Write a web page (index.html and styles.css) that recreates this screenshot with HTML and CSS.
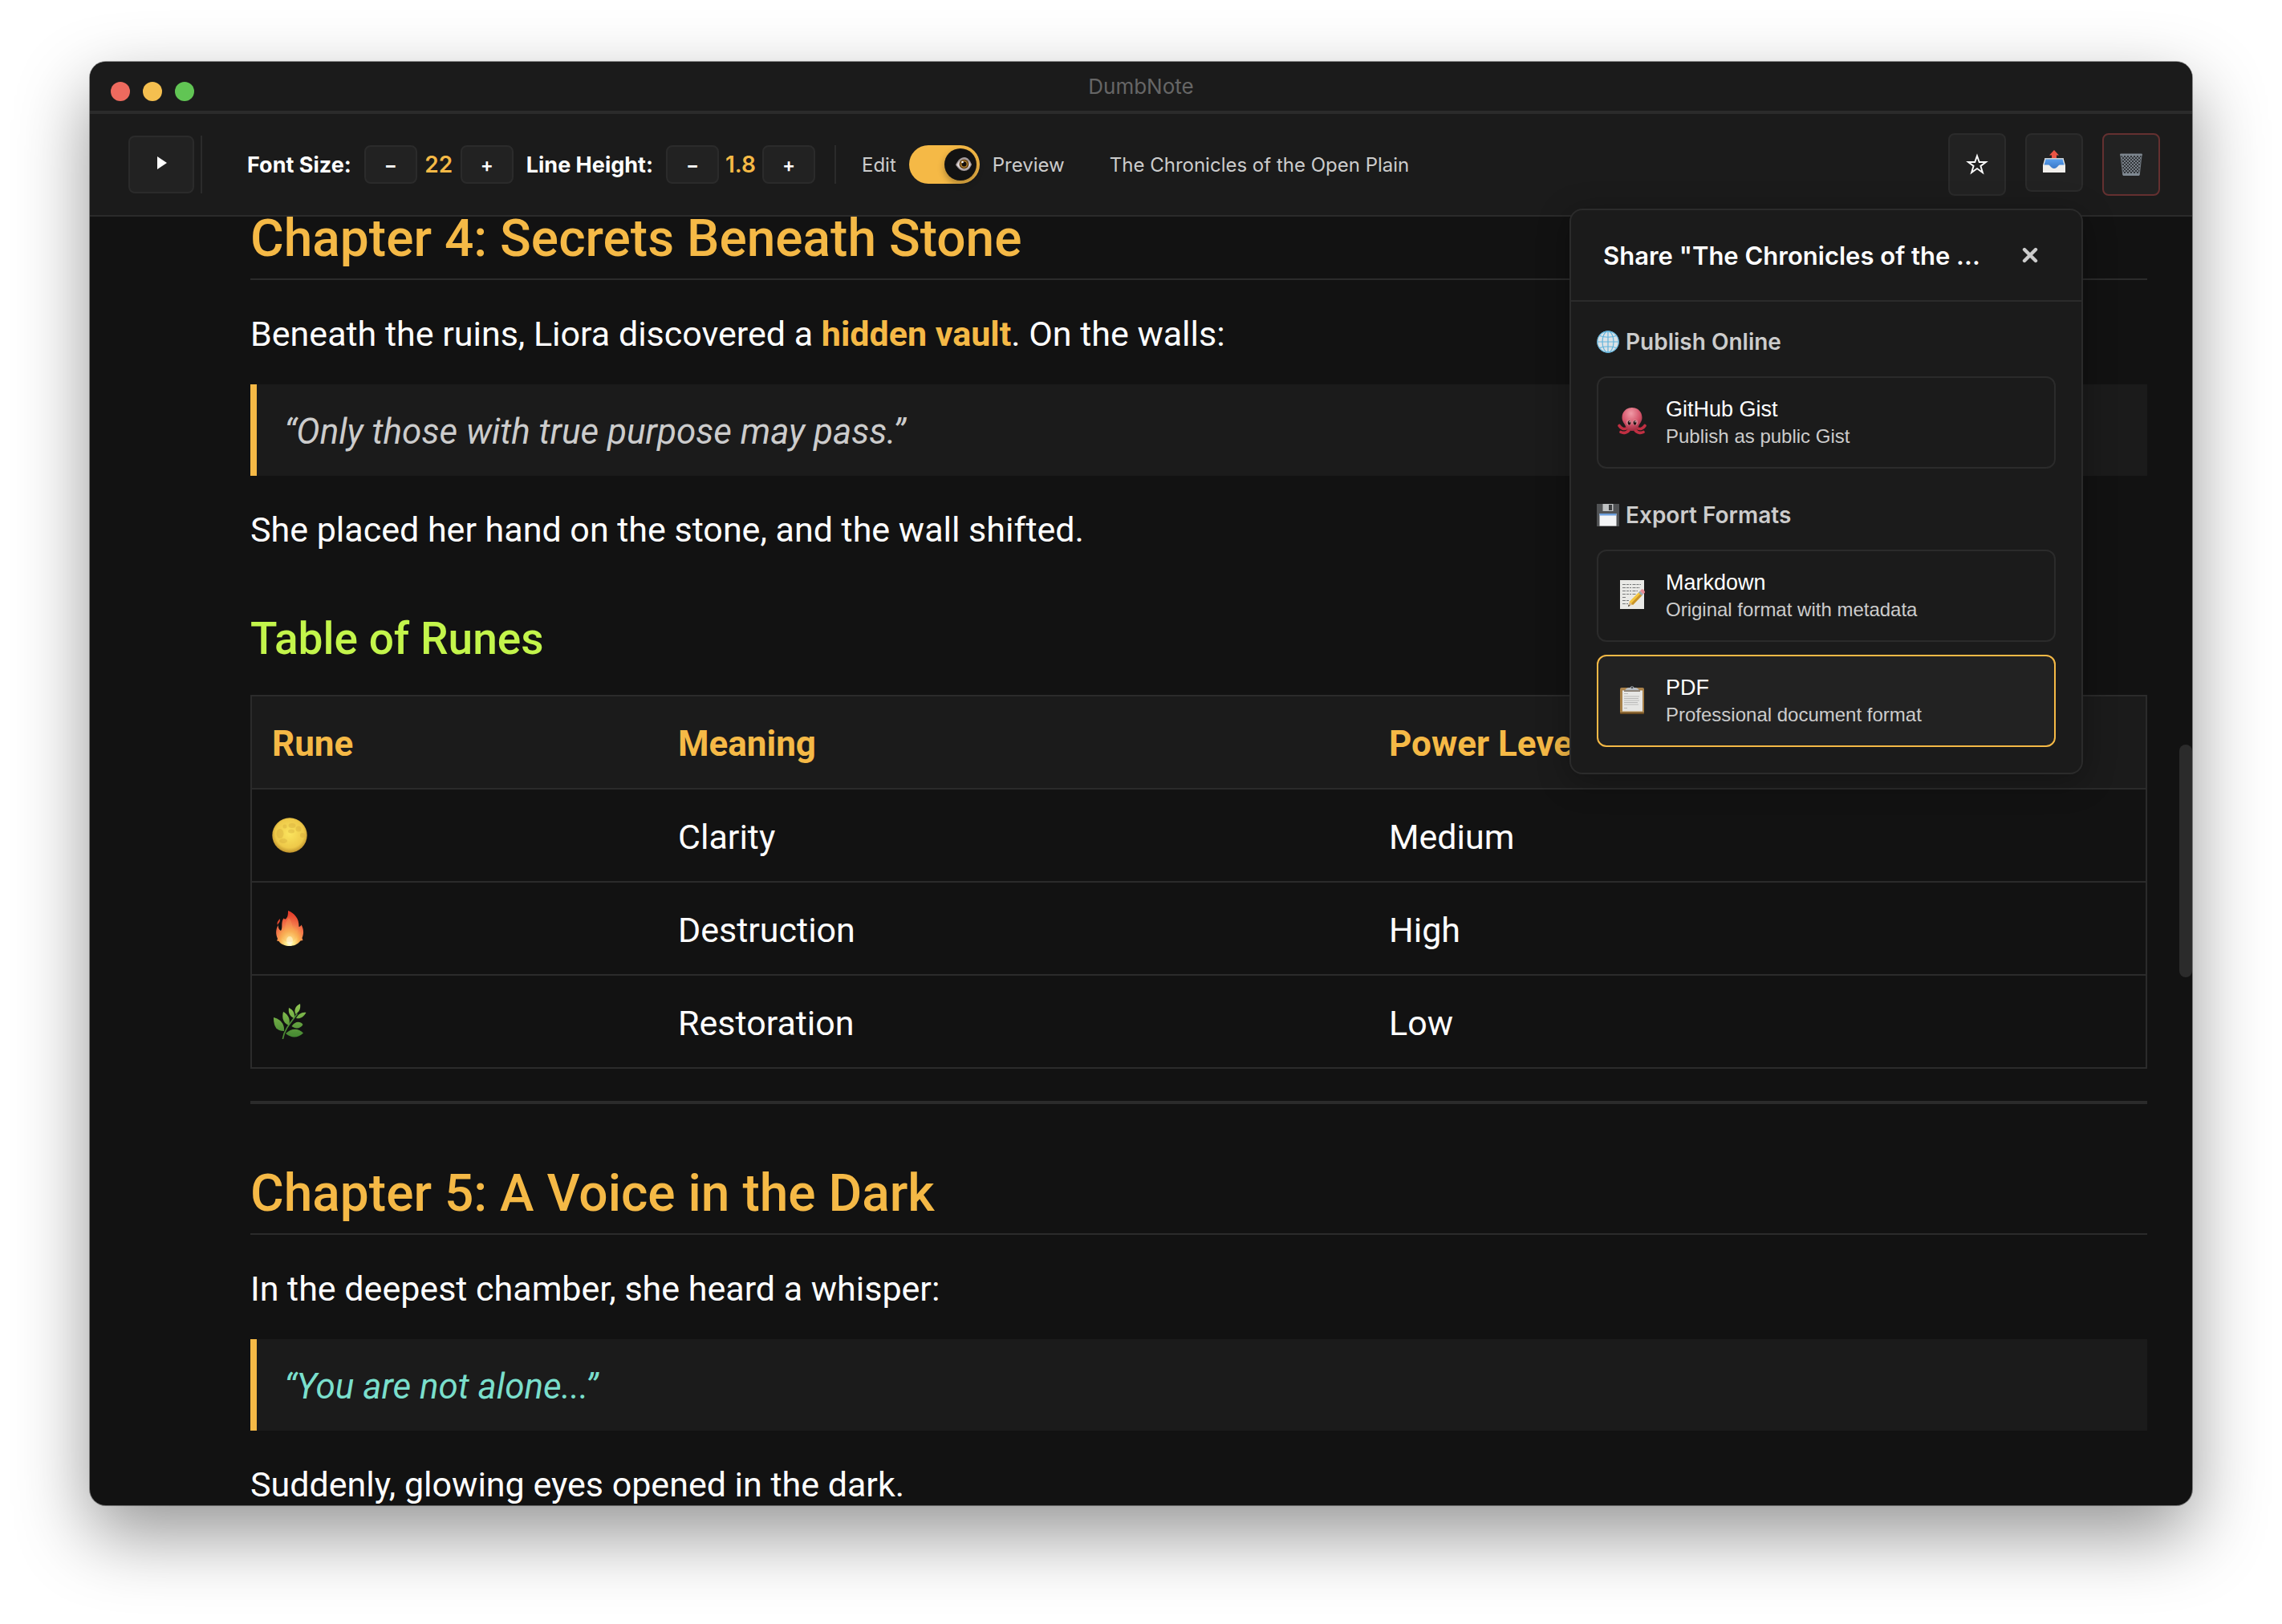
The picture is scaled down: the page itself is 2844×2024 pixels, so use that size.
FILE: index.html
```html
<!DOCTYPE html>
<html lang="en">
<head>
<meta charset="utf-8">
<meta name="viewport" content="width=device-width, initial-scale=1">
<title>DumbNote</title>
<link rel="stylesheet" href="styles.css">
</head>
<body>
<div class="window">
  <header class="titlebar">
    <div class="lights">
      <button class="light light-close" type="button" aria-label="Close window"></button>
      <button class="light light-min" type="button" aria-label="Minimize window"></button>
      <button class="light light-zoom" type="button" aria-label="Zoom window"></button>
    </div>
    <h1 class="app-name">DumbNote</h1>
  </header>

  <div class="toolbar" role="toolbar" aria-label="Note settings">
    <div class="sidebar-toggle">
      <button class="btn btn-expand" type="button" aria-label="Show notes list">
        <svg width="14" height="16" viewBox="0 0 14 16" aria-hidden="true"><path d="M2 0 14 8 2 16Z" fill="#fff"/></svg>
      </button>
    </div>

    <div class="steppers">
      <div class="stepper" role="group" aria-labelledby="font-size-label">
        <span class="stepper-label" id="font-size-label">Font Size:</span>
        <button class="btn btn-step" type="button" aria-label="Decrease font size">−</button>
        <output class="stepper-value">22</output>
        <button class="btn btn-step" type="button" aria-label="Increase font size">+</button>
      </div>
      <div class="stepper" role="group" aria-labelledby="line-height-label">
        <span class="stepper-label" id="line-height-label">Line Height:</span>
        <button class="btn btn-step" type="button" aria-label="Decrease line height">−</button>
        <output class="stepper-value">1.8</output>
        <button class="btn btn-step" type="button" aria-label="Increase line height">+</button>
      </div>
    </div>

    <div class="mode">
      <span>Edit</span>
      <span class="switch">
        <input class="switch-input" type="checkbox" role="switch" id="preview-mode" checked>
        <svg class="switch-eye" width="20" height="20" viewBox="0 0 20 20" aria-hidden="true">
          <path d="M0 10.500C3 4.500 6 1 11 1c4 0 7 4 9 9-2 5-5 8-9.500 8C6 18 3 15 0 10.500Z" fill="#a39a9c"/>
          <path d="M1.500 10.500C4 6 7 3.500 11 3.500c3 0 5.500 3 7.500 6.500-2 4-4.500 6-8 6-4 0-6.500-2-9-5.500Z" fill="#e6dedf"/>
          <circle cx="10.500" cy="9.500" r="6" fill="#5a3a12"/>
          <circle cx="10.500" cy="9.500" r="4.700" fill="#a8782a"/>
          <circle cx="10.500" cy="9.500" r="3" fill="#120d0a"/>
          <circle cx="8.500" cy="7" r="1.300" fill="#fff"/>
        </svg>
      </span>
      <label for="preview-mode">Preview</label>
    </div>

    <p class="note-name">The Chronicles of the Open Plain</p>

    <div class="actions">
      <button class="btn btn-action" type="button" aria-label="Add to favorites">
        <svg width="28" height="28" viewBox="0 0 28 28" aria-hidden="true"><path d="M14 3.200 16.700 11H25l-6.600 4.900 2.500 8.100L14 19.100 7.100 24l2.500-8.100L3 11h8.300Z" fill="none" stroke="#fff" stroke-width="1.900"/></svg>
      </button>
      <div class="share">
        <button class="btn btn-action btn-share" type="button" aria-label="Share note" aria-expanded="true" aria-controls="share-panel">
          <svg width="28" height="28" viewBox="0 0 28 28" aria-hidden="true">
            <defs><linearGradient id="tray" x1="0" y1="0" x2="0" y2="1"><stop offset="0" stop-color="#5aa0ee"/><stop offset="1" stop-color="#3a78c8"/></linearGradient></defs>
            <path d="M2.500 10h23L28 19v9H0v-9Z" fill="#f1efec"/>
            <path d="M3.500 11h21l2 7.500h-5.500c-2 0-3 4.500-7 4.500s-5-4.500-7-4.500H1.500Z" fill="url(#tray)"/>
            <path d="M2.500 10h23l.3 1.500H2.200Z" fill="#c9cfd3"/>
            <path d="M14 0 20 6.500h-3V10h-6V6.500H8Z" fill="#ea5545"/>
          </svg>
        </button>

        <section class="panel" id="share-panel" aria-labelledby="share-title">
          <header class="panel-head">
            <h2 class="panel-title" id="share-title">Share "The Chronicles of the ...</h2>
            <button class="panel-close" type="button" aria-label="Close share panel">
              <svg width="20" height="20" viewBox="0 0 20 20" aria-hidden="true"><path d="M3 3 17 17M17 3 3 17" fill="none" stroke="#ccc" stroke-width="4.400" stroke-linecap="round"/></svg>
            </button>
          </header>
          <div class="panel-body">
            <h3 class="panel-group">
              <svg width="28" height="28" viewBox="0 0 28 28" aria-hidden="true">
                <circle cx="14" cy="14" r="13.500" fill="#dbe2e6"/>
                <g fill="none" stroke="#62b4dc" stroke-width="1.200"><circle cx="14" cy="14" r="13.200"/><ellipse cx="14" cy="14" rx="7" ry="13.200"/><path d="M14 1v26M1 14h26M3.500 6.500Q14 10 24.500 6.500M3.500 21.500Q14 18 24.500 21.500"/></g>
              </svg>
              Publish Online
            </h3>
            <button class="option" type="button">
              <svg class="option-icon" width="36" height="36" viewBox="0 0 36 36" aria-hidden="true">
                <defs><radialGradient id="octo" cx=".45" cy=".25" r=".8"><stop offset="0" stop-color="#f09aa6"/><stop offset=".55" stop-color="#d5566c"/><stop offset="1" stop-color="#96263a"/></radialGradient></defs>
                <g fill="none" stroke="#c02f42" stroke-linecap="round" stroke-width="3.600"><path d="M13 26C8 29 4 27 2 23.500M23 26c5 3 9 1 11-2.500M15 28c-3 5-8 5-11 3.500M21 28c3 5 8 5 11 3.500"/></g>
                <path d="M18 1c7.500 0 12.500 5.500 12.500 12.500 0 5-3 7-4.500 11C25 28 21 30 18 30s-7-2-8-5.500c-1.500-4-4.500-6-4.500-11C5.500 6.500 10.500 1 18 1Z" fill="url(#octo)"/>
                <g fill="#d8808c"><circle cx="14.300" cy="19.500" r="3.400"/><circle cx="21.700" cy="19.500" r="3.400"/></g>
                <g fill="#241014"><ellipse cx="14.500" cy="20" rx="1.900" ry="2.700"/><ellipse cx="21.500" cy="20" rx="1.900" ry="2.700"/></g>
                <g fill="#fff"><circle cx="15" cy="18.800" r=".7"/><circle cx="22" cy="18.800" r=".7"/></g>
              </svg>
              <span class="option-text"><span class="option-name">GitHub Gist</span><span class="option-note">Publish as public Gist</span></span>
            </button>

            <h3 class="panel-group">
              <svg width="28" height="28" viewBox="0 0 28 28" aria-hidden="true">
                <path d="M0 0h28v28H0Z" fill="#505254"/>
                <path d="M7.500 0h13v9h-13Z" fill="#bfc1c2"/><path d="M15 1h4v7h-4Z" fill="#3c3e40"/>
                <path d="M3.500 12h21v15.500h-21Z" fill="#f4f5f6"/><path d="M3.500 12h21v2.500h-21Z" fill="#6c9fdc"/>
              </svg>
              Export Formats
            </h3>
            <button class="option" type="button">
              <svg class="option-icon" width="36" height="36" viewBox="0 0 36 36" aria-hidden="true">
                <path d="M3 0h30v36H3Z" fill="#e9e9e6"/>
                <g fill="none" stroke="#77797a" stroke-width="1.200" stroke-dasharray="4 1 3 1 2 1.500"><path d="M6 5.500h23M6 9.500h22M6 13.500h19M6 17.500h17M6 21.500h5M6 25.500h9M6 29.500h7"/></g>
                <path d="M13 33 15 26.500 18.500 30.500Z" fill="#d8b98a"/><path d="m13 33 .8-2.500 1.500 1.600Z" fill="#333"/>
                <path d="M14.500 27 27 14.500 31 18.500 19 31Z" fill="#f3c540"/><path d="M17 29 29 16.500 31 18.500 19 31Z" fill="#c8932a"/>
                <path d="m26 15.500 2-2 4 4-2 2Z" fill="#9aa7b0"/><path d="m28 13.500 1.500-1.800q1.500-1 3.300.7t1 3.600L32 17.500Z" fill="#e88a92"/>
              </svg>
              <span class="option-text"><span class="option-name">Markdown</span><span class="option-note">Original format with metadata</span></span>
            </button>
            <button class="option option-active" type="button">
              <svg class="option-icon" width="36" height="36" viewBox="0 0 36 36" aria-hidden="true">
                <rect x="3" y="3" width="30" height="33" rx="2" fill="#a9824a"/><path d="M3 34h30v1q0 1-2 1H5q-2 0-2-1Z" fill="#6d4d22"/>
                <path d="M6 6.500h25v26H6Z" fill="#e6e6e4"/>
                <g fill="none" stroke="#b9b9b8" stroke-width="1.200"><path d="M8 10.500h5M8 14h19M8 16.500h18M8 19h19M8 21.500h17M8 24h18M8 28.500h4"/></g>
                <path d="M9 7.500q.5-4 5-4.500h1.500a2.700 2.700 0 0 1 5 0H22q4.500.5 5 4.500Z" fill="#b6bcc2"/><path d="M8 6.300h20v1.700H8Z" fill="#85796c"/><circle cx="18" cy="3" r="1.300" fill="#4c5054"/>
              </svg>
              <span class="option-text"><span class="option-name">PDF</span><span class="option-note">Professional document format</span></span>
            </button>
          </div>
        </section>
      </div>
      <button class="btn btn-action btn-delete" type="button" aria-label="Delete note">
        <svg width="28" height="28" viewBox="0 0 28 28" aria-hidden="true">
          <defs><pattern id="mesh" width="4" height="4" patternUnits="userSpaceOnUse"><path d="M0 0 4 4M4 0 0 4" stroke="#8a929a" stroke-width=".8"/></pattern></defs>
          <path d="M1.500 2h25L24 27H4Z" fill="#33373b"/><path d="M1.500 2h25L24 27H4Z" fill="url(#mesh)"/>
          <path d="M1 2 3.800 27M27 2l-2.800 25" stroke="#6d757d" stroke-width="1.200"/>
          <rect x="0" y=".5" width="28" height="2.500" rx="1.200" fill="#7d868e"/><path d="M3.500 25h21l-.3 3H3.800Z" fill="#7f8992"/>
        </svg>
      </button>
    </div>
  </div>

  <main class="scroller">
    <article class="note">
      <h2>Chapter 4: Secrets Beneath Stone</h2>
      <p>Beneath the ruins, Liora discovered a <strong>hidden vault</strong>. On the walls:</p>
      <blockquote>“Only those with true purpose may pass.”</blockquote>
      <p>She placed her hand on the stone, and the wall shifted.</p>

      <h3>Table of Runes</h3>
      <table class="runes">
        <thead>
          <tr><th class="col-rune" scope="col">Rune</th><th class="col-meaning" scope="col">Meaning</th><th scope="col">Power Level</th></tr>
        </thead>
        <tbody>
          <tr>
            <td>
              <svg class="rune" width="44" height="44" viewBox="0 0 44 44" role="img" aria-label="Full moon">
                <defs><radialGradient id="moon" cx=".5" cy=".45" r=".55"><stop offset="0" stop-color="#fbe45e"/><stop offset=".75" stop-color="#eec949"/><stop offset="1" stop-color="#bf922c"/></radialGradient></defs>
                <circle cx="22" cy="22" r="21.700" fill="url(#moon)"/>
                <g fill="#d0a539" opacity=".35"><ellipse cx="10" cy="20" rx="4.500" ry="6"/><ellipse cx="25" cy="10" rx="4.500" ry="3"/><circle cx="33" cy="14" r="3.500"/><circle cx="38" cy="22" r="3"/><ellipse cx="14" cy="29" rx="5" ry="3"/><ellipse cx="24" cy="17" rx="4" ry="2.500"/><circle cx="16" cy="11" r="2.500"/></g>
              </svg>
            </td>
            <td>Clarity</td><td>Medium</td>
          </tr>
          <tr>
            <td>
              <svg class="rune" width="44" height="44" viewBox="0 0 44 44" role="img" aria-label="Fire">
                <defs><radialGradient id="fire" cx=".5" cy=".92" r=".85"><stop offset="0" stop-color="#fffbe0"/><stop offset=".16" stop-color="#ffee90"/><stop offset=".4" stop-color="#f9b050"/><stop offset=".65" stop-color="#f3764a"/><stop offset="1" stop-color="#e53d2a"/></radialGradient></defs>
                <path d="M20 0c8 3 14 10 13.500 20 1.500 0 2.500-1 3-2.500 3 5 3.500 11 1 16.500l1 3-3 .5C32 42 27 44 22 44s-11-2-13.500-6L6 37.500 7 35c-2.500-6-2.500-11 .5-17 .5 4 1.500 6 3.500 7 3-4-.5-10 3.500-15.500.500.500 1.500 1 2.500 1C20 8 20 4 20 0Z" fill="url(#fire)"/>
                <path d="M9.500 10c1.500 4-1.500 5-2.500 8C5.500 14 8 13 9.500 10Z" fill="#e5482f"/>
                <path d="M21 9c5 5 3 11 7 15 1.500 1 3 .5 4-.5.5 9-4 16-10 16S11 35 12 27c3-1 4-4 4.500-8S18 12 21 9Z" fill="#f8a458" opacity=".3"/>
                <ellipse cx="22" cy="37" rx="4" ry="5" fill="#fffbe0" opacity=".5"/>
              </svg>
            </td>
            <td>Destruction</td><td>High</td>
          </tr>
          <tr>
            <td>
              <svg class="rune" width="44" height="44" viewBox="0 0 44 44" role="img" aria-label="Herb">
                <defs><linearGradient id="leaf" x1="0" y1="0" x2="0" y2="44" gradientUnits="userSpaceOnUse"><stop offset="0" stop-color="#93c954"/><stop offset="1" stop-color="#3f8330"/></linearGradient></defs>
                <path d="M13.500 43.500C15 33 22 25 31 13" fill="none" stroke="#4c8a35" stroke-width="1.700" stroke-linecap="round"/>
                <g fill="url(#leaf)">
                  <path d="M2 17c8 2 14 8 13 17C5 34 2 28 2 17Z"/><path d="M14 10c7 4 9 10 7 17-7-3-9-9-7-17Z"/>
                  <path d="M21 5c6 3 8 8 6.500 13C22 16 20 11 21 5Z"/><path d="M35 0c1 6-1 10-5.500 13C27 8 29 3 35 0Z"/>
                  <path d="M42.500 11c-5-1-10 2-12.500 7 5 1 9-1 12.500-7Z"/><path d="M38.500 26c-3-4-9-5-14 2 5 4 11 3 14-2Z"/><path d="M39 36.500c-6-6-14-7-22 .5 7 6 15 6 22-.5Z"/>
                </g>
              </svg>
            </td>
            <td>Restoration</td><td>Low</td>
          </tr>
        </tbody>
      </table>
      <hr>

      <h2>Chapter 5: A Voice in the Dark</h2>
      <p>In the deepest chamber, she heard a whisper:</p>
      <blockquote class="whisper">“You are not alone...”</blockquote>
      <p>Suddenly, glowing eyes opened in the dark.</p>
    </article>
    <span class="scroll-thumb" aria-hidden="true"></span>
  </main>
</div>
</body>
</html>
```
FILE: styles.css
```css
:root {
  --bg: #121212;
  --surface: #1b1b1b;
  --raised: #222222;
  --line: #2b2b2b;
  --text: #ffffff;
  --muted: #cccccc;
  --accent: #f5b946;
  --lime: #c3f54b;
  --teal: #7adfcc;
}

* {
  box-sizing: border-box;
}

body {
  margin: 0;
  height: 100vh;
  padding: 77px 112px 148px;
  background: #fff;
  color: var(--text);
  font-family: Inter, "Liberation Sans", sans-serif;
  font-size: 24px;
}

h1, h2, h3, p, blockquote {
  margin: 0;
}

button {
  font: inherit;
  color: inherit;
  padding: 0;
  cursor: pointer;
}

svg {
  display: block;
  flex: none;
}

.window {
  height: 100%;
  display: flex;
  flex-direction: column;
  overflow: hidden;
  border-radius: 20px;
  background: var(--bg);
  box-shadow: 0 0 0 1px rgba(0, 0, 0, 0.4), 0 36px 90px rgba(0, 0, 0, 0.42);
}

/* Title bar */
.titlebar {
  flex: none;
  display: grid;
  grid-template-columns: 1fr auto 1fr;
  height: 65px;
  border-bottom: 4px solid var(--line);
  background: var(--surface);
}

.lights {
  display: flex;
  align-items: flex-end;
  gap: 16px;
  padding: 0 26px 13px;
}

.light {
  width: 24px;
  height: 24px;
  border: 0;
  border-radius: 50%;
}

.light-close { background: #ed6a5e; }
.light-min { background: #f5bf4f; }
.light-zoom { background: #61c554; }

.app-name {
  color: #666;
  font-size: 26px;
  font-weight: 400;
  line-height: 62px;
}

/* Toolbar */
.toolbar {
  flex: none;
  display: flex;
  align-items: center;
  height: 128px;
  padding: 0 40px 0 48px;
  border-bottom: 2px solid var(--line);
  background: var(--surface);
  color: var(--muted);
}

.btn {
  flex: none;
  display: flex;
  align-items: center;
  justify-content: center;
  border: 2px solid var(--line);
  border-radius: 8px;
  background: var(--raised);
  color: var(--text);
}

.sidebar-toggle {
  padding-right: 8px;
  border-right: 2px solid var(--line);
}

.btn-expand {
  width: 82px;
  height: 72px;
  padding-bottom: 4px;
}

.steppers {
  display: flex;
  gap: 16px;
  height: 48px;
  margin-left: 56px;
  padding-right: 24px;
  border-right: 2px solid var(--line);
}

.stepper {
  display: flex;
  align-items: center;
  gap: 8px;
}

.stepper-label {
  margin-right: 8px;
  color: var(--text);
  font-size: 27px;
  font-weight: 700;
}

.btn-step {
  width: 66px;
  height: 48px;
  font-size: 24px;
  font-weight: 600;
}

.stepper-value {
  min-width: 38px;
  color: var(--accent);
  font-size: 28px;
  font-weight: 600;
  text-align: center;
}

.mode {
  display: flex;
  align-items: center;
  gap: 16px;
  margin-left: 32px;
}

.switch {
  position: relative;
  display: flex;
}

.switch-input {
  appearance: none;
  width: 88px;
  height: 48px;
  margin: 0;
  padding: 4px;
  border-radius: 24px;
  background: var(--line);
  cursor: pointer;
}

.switch-input::before {
  content: "";
  display: block;
  width: 40px;
  height: 40px;
  border-radius: 50%;
  background: var(--bg);
  box-shadow: 0 4px 8px rgba(0, 0, 0, 0.3);
}

.switch-input:checked {
  background: var(--accent);
}

.switch-input:checked::before {
  margin-left: auto;
}

.switch-eye {
  position: absolute;
  top: 14px;
  right: 10px;
  pointer-events: none;
}

.note-name {
  margin-left: 56px;
}

.actions {
  display: flex;
  align-items: flex-start;
  gap: 24px;
  margin-left: auto;
}

.btn-action {
  width: 72px;
  height: 78px;
}

.btn-share {
  height: 73px;
  padding-bottom: 4px;
}

.btn-delete {
  border-color: #643030;
}

/* Share panel */
.share {
  position: relative;
}

.panel {
  position: absolute;
  top: 94px;
  right: 0;
  z-index: 10;
  width: 640px;
  border: 2px solid var(--line);
  border-radius: 16px;
  background: var(--surface);
  box-shadow: 0 8px 40px rgba(0, 0, 0, 0.3);
}

.panel-head {
  display: flex;
  align-items: center;
  justify-content: space-between;
  height: 114px;
  padding: 0 50px 0 40px;
  border-bottom: 2px solid var(--line);
}

.panel-title {
  color: var(--text);
  font-size: 31px;
  font-weight: 600;
  white-space: nowrap;
}

.panel-close {
  display: flex;
  border: 0;
  padding: 4px;
  background: none;
}

.panel-body {
  padding: 31px 32px 32px;
}

.panel-group {
  display: flex;
  align-items: center;
  gap: 8px;
  margin-bottom: 24px;
  font-size: 28px;
  font-weight: 600;
  line-height: 38px;
}

.option {
  display: flex;
  align-items: center;
  width: 100%;
  height: 115px;
  gap: 24px;
  padding: 0 24px;
  border: 2px solid var(--line);
  border-radius: 12px;
  background: none;
  color: var(--muted);
  font-family: "Liberation Sans", Arial, sans-serif;
  text-align: left;
}

.option + .option {
  margin-top: 16px;
}

.option + .panel-group {
  margin-top: 39px;
}

.option-active {
  border-color: var(--accent);
  background: var(--raised);
}

.option-icon {
  margin-bottom: 4px;
}

.option-text {
  display: grid;
  gap: 4px;
}

.option-name {
  color: var(--text);
  font-size: 27px;
  line-height: 30px;
}

.option-note {
  font-size: 24px;
  line-height: 30px;
}

/* Note */
.scroller {
  position: relative;
  flex: 1;
  min-height: 0;
  overflow: hidden;
}

.note {
  padding: 0 56px 0 200px;
  font-family: Roboto, "Liberation Sans", sans-serif;
  font-size: 43px;
  line-height: 80px;
}

.note h2 {
  padding-bottom: 21px;
  border-bottom: 2px solid var(--line);
  color: var(--accent);
  font-size: 64px;
  font-weight: 500;
  line-height: 56px;
}

.note p {
  margin-top: 27px;
}

.note blockquote {
  margin-top: 23px;
  padding: 19px 34px 15px;
  border-left: 8px solid var(--accent);
  background: var(--surface);
  color: var(--muted);
  font-size: 44px;
  font-style: italic;
}

.note .whisper {
  color: var(--teal);
}

.note strong {
  color: var(--accent);
  font-weight: 700;
}

.note h3 {
  margin: 56px 0 30px;
  color: var(--lime);
  font-size: 55px;
  font-weight: 500;
}

.runes {
  width: 100%;
  border: 2px solid var(--line);
  border-collapse: collapse;
  table-layout: fixed;
}

.runes th,
.runes td {
  height: 116px;
  padding: 4px 25px 0;
  border-bottom: 2px solid var(--line);
  text-align: left;
}

.runes th {
  background: var(--surface);
  color: var(--accent);
  font-size: 44px;
  font-weight: 700;
}

.rune {
  margin-bottom: 4px;
}

.col-rune { width: 507px; }
.col-meaning { width: 886px; }

.note hr {
  height: 4px;
  margin: 40px 0 84px;
  border: 0;
  background: var(--line);
}

.scroll-thumb {
  position: absolute;
  top: 41%;
  right: 0;
  width: 16px;
  height: 18%;
  border-radius: 8px;
  background: var(--line);
}
```
